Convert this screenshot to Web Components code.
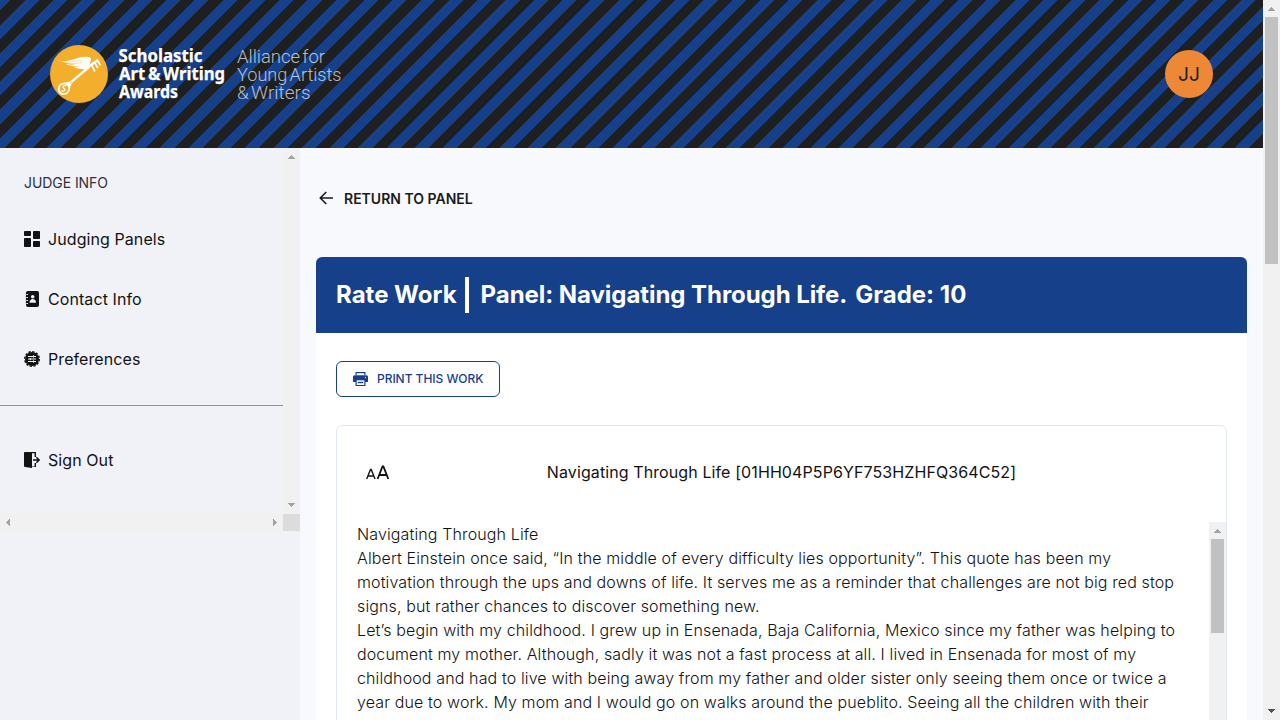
<!DOCTYPE html>
<html lang="en">
<head>
<meta charset="utf-8">
<title>Rate Work</title>
<style>
html,body{margin:0;height:100%;overflow:hidden}
body{font-family:Inter,sans-serif;font-size:16px;line-height:24px;color:#111214;background:#f8f9fd}
</style>
</head>
<body>
<judging-app></judging-app>
<script>
const define = (name, html) => {
  const t = document.createElement('template');
  t.innerHTML = html;
  customElements.define(name, class extends HTMLElement {
    constructor() {
      super();
      this.attachShadow({mode: 'open'}).append(t.content.cloneNode(true));
    }
  });
};

/* Classic scrollbar: track, two arrow buttons and an optional thumb */
customElements.define('scroll-bar', class extends HTMLElement {
  connectedCallback() {
    const h = this.hasAttribute('horizontal');
    const thumb = this.getAttribute('thumb');
    const end = this.getAttribute('end') || '#a3a3a3';
    const up = 'M3 0h1v1h1v1h1v1h1v1H0V3h1V2h1V1h1z', down = 'M0 0h7v1H6v1H5v1H4v1H3V3H2V2H1V1H0z';
    const left = 'M4 0v7H3V6H2V5H1V4H0V3h1V2h1V1h1V0z', right = 'M0 0v7h1V6h1V5h1V4h1V3H3V2H2V1H1V0z';
    const btn = (d, x, y, c) => `<svg width="17" height="17" shape-rendering="crispEdges"><path transform="translate(${x} ${y})" d="${d}" fill="${c}"/></svg>`;
    this.attachShadow({mode: 'open'}).innerHTML = `<style>
      :host{display:flex;flex-direction:${h ? 'row' : 'column'};flex:none;${h ? 'height' : 'width'}:17px;background:#f1f1f1;overflow:hidden}
      svg{flex:none;display:block}
      .track{flex:1;min-height:0}
      .thumb{width:13px;margin:0 2px;height:${thumb || 0}px;background:#c1c1c1}
      </style>${h ? btn(left, 6, 5, '#a3a3a3') : btn(up, 5, 7, '#a3a3a3')}
      <div class="track">${thumb ? '<div class="thumb"></div>' : ''}</div>
      ${h ? btn(right, 7, 5, end) : btn(down, 5, 6, end)}`;
  }
});

define('awards-logo', `<style>:host{display:block;width:300px;height:60px}svg{display:block;overflow:visible}
.b{font:700 18.6px "Noto Sans",sans-serif;fill:#fff;stroke:#fff;stroke-width:.25px;word-spacing:-1.8px}.l{font:300 19px Roboto,sans-serif;fill:#fff;fill-opacity:.7;word-spacing:-2.2px}</style>
<svg width="300" height="60" viewBox="50 44 300 60">
<circle cx="79" cy="74" r="29" fill="#f3ae2c"/>
<path d="M58 90.500c-.8-4.500 2.200-8 6.500-8.100 3.400-.2 5.500-.8 7.800-3L88.500 66l1.600 1.800L73.900 81.300c-2.600 2.200-3.300 4-3.700 6.800-.6 4.200-3.200 7-6.800 7-2.800 0-4.900-1.900-5.400-4.600z" fill="#fff"/>
<ellipse cx="64" cy="88.700" rx="4.300" ry="4.500" fill="#f3ae2c"/>
<path d="M66.300 86.100c-1.500-1.300-3.700-.3-3.300 1.200.4 1.300 2.200 1 1.900 2.600-.3 1.500-2.200 1.600-3.100.6" fill="none" stroke="#fff" stroke-width="1.200"/>
<path d="M70 83.500l2.600-2.300" stroke="#f3ae2c" stroke-width=".7"/>
<path d="M87.500 67.200L98.300 59.800" stroke="#fff" stroke-width="2.600"/>
<path d="M91.700 65l3.200 6.500M94.800 63l3.100 5M97.300 60.500l3.200 4.800" stroke="#fff" stroke-width="1.700"/>
<path d="M57 60.600c7 1.300 12.500.3 17.500-1.500 5.600-2 10.500-2.800 13.800-2.100 2.600.6 3.600 2.300 2.200 4.200-.8 1.200-1 2.500-.9 4.800l-3.400 3c-5.200 1-8.500-.6-13-2 3 .2 5-.1 6.400-.6-5.100.4-9.800-.5-13.800-2.300 4.600.6 8 .4 10.500-.4-5.600.2-10.400-.5-14.300-2.200 4.800.6 8.400.4 11.200-.4-6.400.7-12.300.9-16.200-.5z" fill="#fff"/>
<path d="M66 62.600l16-2.200M69 65l13-2.600" stroke="#f3ae2c" stroke-width=".4"/>
<text class="b" x="118.500" y="62.300" textLength="84" lengthAdjust="spacingAndGlyphs">Scholastic</text>
<text class="b" x="119" y="80.200" textLength="106" lengthAdjust="spacingAndGlyphs">Art &amp; Writing</text>
<text class="b" x="119" y="98.100" textLength="59" lengthAdjust="spacingAndGlyphs">Awards</text>
<text class="l" x="237" y="62.700" textLength="88" lengthAdjust="spacingAndGlyphs">Alliance for</text>
<text class="l" x="237" y="80.700" textLength="104.500" lengthAdjust="spacingAndGlyphs">Young Artists</text>
<text class="l" x="237" y="98.900" textLength="73.500" lengthAdjust="spacingAndGlyphs">&amp; Writers</text>
</svg>`);

define('user-avatar', `<style>:host{display:flex;align-items:center;justify-content:center;width:48px;height:48px;border-radius:50%;background:#ed8936;color:#1e1f20;font-size:19.2px}</style><slot></slot>`);

define('site-header', `<style>:host{display:flex;align-items:center;justify-content:space-between;box-sizing:border-box;height:148px;flex:none;padding:0 50px;background:repeating-linear-gradient(-45deg,#1e1f20,#1e1f20 10px,#17408b 10px,#17408b 20px)}</style><awards-logo></awards-logo><user-avatar>JJ</user-avatar>`);

define('nav-item', `<style>:host{display:flex;align-items:center;gap:8px;height:60px;padding-left:24px;color:#111214;letter-spacing:.08px}::slotted(svg){display:block;flex:none}</style><slot name="icon"></slot><span><slot></slot></span>`);

define('side-nav', `<style>
:host{display:block;width:300px;flex:none;background:#f1f2f8}
.view{display:grid;grid-template-columns:283px 17px;grid-template-rows:366px 17px}
.corner{background:#dcdcdc}
h2{margin:0;padding:25px 0 16px 24px;font-size:14px;font-weight:400;line-height:20px;letter-spacing:-.07px;color:#2d3138}
hr{margin:16px 0 24px;border:0;height:1px;background:#8a94a8}
</style>
<div class="view"><nav><h2>JUDGE INFO</h2>
<nav-item><svg slot="icon" width="16" height="16" fill="#111214"><rect width="7" height="5" rx=".8"/><rect y="7" width="7" height="9" rx=".8"/><rect x="9" width="7" height="8" rx=".8"/><rect x="9" y="10" width="7" height="6" rx=".8"/></svg>Judging Panels</nav-item>
<nav-item><svg slot="icon" width="16" height="16"><rect x="2" width="13" height="16" rx="2" fill="#111214"/><path d="M1 3.500h3M1 6.500h3M1 9.500h3M1 12.500h3" stroke="#f1f2f8" stroke-width="1.100"/><path d="M1.600 3h1.500M1.600 6h1.500M1.600 9h1.500M1.600 12h1.500" stroke="#111214" stroke-width=".6"/><circle cx="8.700" cy="5.700" r="1.800" fill="#f1f2f8"/><path d="M5.500 11.800c0-5 6.500-5 6.500 0z" fill="#f1f2f8"/></svg>Contact Info</nav-item>
<nav-item><svg slot="icon" width="16" height="16"><circle cx="8" cy="8" r="7" fill="#111214"/><circle cx="8" cy="8" r="7.300" fill="none" stroke="#111214" stroke-width="1.400" stroke-dasharray="2.300 1.520"/><path d="M4 5.500h8M4 8h8M4 10.500h8" stroke="#f1f2f8"/><path d="M9.500 4.400v2.200M6.300 6.900v2.200M9.500 9.400v2.200" stroke="#f1f2f8"/></svg>Preferences</nav-item>
<hr>
<nav-item><svg slot="icon" width="16" height="16"><path d="M0 .8Q0 0 .8 0H12v5h-1.400V1.300H8v13.200h2.600V11H12v4H8v1L1 15Q0 14.900 0 14z" fill="#111214"/><path d="M9 8h6M12.300 5.200L15.200 8l-2.900 2.800" fill="none" stroke="#111214" stroke-width="1.400"/></svg>Sign Out</nav-item>
</nav><scroll-bar></scroll-bar><scroll-bar horizontal></scroll-bar><div class="corner"></div></div>`);

define('back-link', `<style>:host{display:flex;align-items:center;gap:8px;height:24px;font-size:14px;font-weight:600;color:#1a1b1d}svg{display:block;margin:0 0 2px 1px}</style>
<svg width="19" height="16" fill="none" stroke="#1a1b1d" stroke-width="1.600"><path d="M3.500 8H16M9.300 2L3.300 8l6 6"/></svg><slot></slot>`);

define('print-button', `<style>:host{display:flex;align-items:center;gap:8px;box-sizing:border-box;width:164px;height:36px;padding-left:16px;border:1px solid #17408b;border-radius:6px;color:#17408b;background:#fff;font-size:12px;font-weight:500;letter-spacing:-.04px;white-space:nowrap}svg{display:block}</style>
<svg width="16" height="16"><path d="M2.500 1h10v3h-10z" fill="#17408b"/><path d="M3.700 2.200h7.600V4H3.700z" fill="#fff"/><path d="M1.500 4.300h12q1.500 0 1.500 1.500V11H0V5.800q0-1.500 1.500-1.500z" fill="#17408b"/><path d="M2.500 9h10v6h-10z" fill="#17408b"/><path d="M3.700 9.300h7.600V14H3.700z" fill="#fff"/><path d="M4.800 11.500h5.400" stroke="#17408b" stroke-width="1.400"/><circle cx="12.500" cy="6.600" r=".6" fill="#fff"/></svg><slot></slot>`);

define('work-viewer', `<style>
:host{display:flex;flex-direction:column;box-sizing:border-box;height:420px;border:1px solid #e2e8f0;border-radius:6px;background:#fff}
header{display:grid;grid-template-columns:160px 1fr 160px;align-items:center;height:92px;padding:0 20px;margin-bottom:4px}
header svg{display:block;margin-left:9px}
.title{text-align:center;letter-spacing:.1px}
.body{flex:1;display:flex;min-height:0;overflow:hidden}
.text{flex:1;padding:0 24px 0 20px;font-weight:300;letter-spacing:.125px;color:#111214}
</style><header><svg width="24" height="18" fill="none" stroke="#111214" stroke-width="1.400"><path d="M.7 16L4.500 6.500h.7L9 16M2 13h5.700"/><path d="M11.600 16L16.500 3.500h.9L22.300 16M13.400 12h7.200" stroke-width="1.800"/></svg><div class="title"><slot name="title"></slot></div></header>
<div class="body"><div class="text"><slot></slot></div><scroll-bar thumb="94"></scroll-bar></div>`);

define('work-panel', `<style>
:host{display:block;background:#fff;border-radius:6px 6px 0 0;height:500px}
.bar{display:flex;align-items:center;height:76px;padding:0 20px;background:#17408b;color:#fff;border-radius:6px 6px 0 0;font-size:24px;font-weight:700;line-height:36px;white-space:nowrap}
.sep{width:4px;height:36px;background:#fff;margin:0 12px 0 8px}
.panel{letter-spacing:-.06px}
.grade{margin-left:8px}
.content{padding:28px 20px 0;display:grid;gap:28px;justify-items:start}
work-viewer{justify-self:stretch}
</style><div class="bar"><span>Rate Work</span><span class="sep"></span><span class="panel">Panel: Navigating Through Life.</span><span class="grade">Grade: 10</span></div>
<div class="content"><print-button>PRINT THIS WORK</print-button>
<work-viewer><span slot="title">Navigating Through Life [01HH04P5P6YF753HZHFQ364C52]</span>Navigating Through Life<br>Albert Einstein once said, “In the middle of every difficulty lies opportunity”. This quote has been my motivation through the ups and downs of life. It serves me as a reminder that challenges are not big red stop signs, but rather chances to discover something new.<br>Let’s begin with my childhood. I grew up in Ensenada, Baja California, Mexico since my father was helping to document my mother. Although, sadly it was not a fast process at all. I lived in Ensenada for most of my childhood and had to live with being away from my father and older sister only seeing them once or twice a year due to work. My mom and I would go on walks around the pueblito. Seeing all the children with their</work-viewer></div>`);

define('judging-app', `<style>
:host{display:flex;width:100%;height:100vh;overflow:hidden}
.page{flex:1;min-width:0;display:flex;flex-direction:column}
.cols{flex:1;display:flex;min-height:0}
main{flex:1;min-width:0;padding:39px 16px 0}
back-link{margin-bottom:46px}
</style><div class="page"><site-header></site-header><div class="cols"><side-nav></side-nav><main><back-link>RETURN TO PANEL</back-link><work-panel></work-panel></main></div></div><scroll-bar thumb="247" end="#505050"></scroll-bar>`);
</script>
</body>
</html>
